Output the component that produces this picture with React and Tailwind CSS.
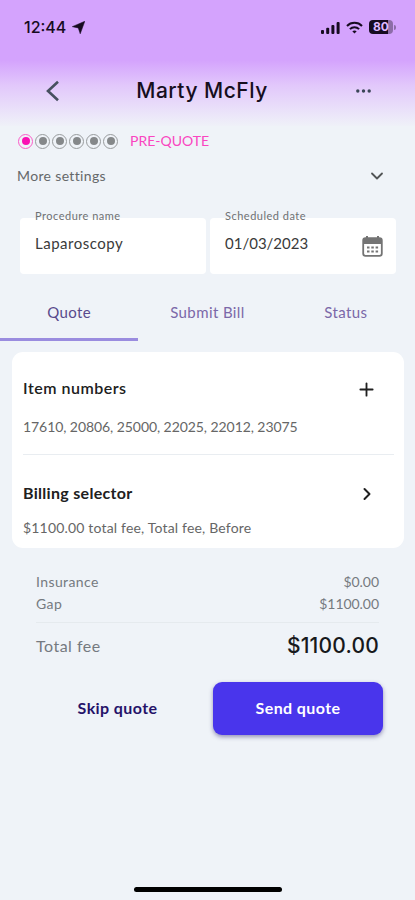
import React, { useState } from 'react';
import { ChevronDown, ChevronRight, Plus } from 'lucide-react';

const tabs = ['Quote', 'Submit Bill', 'Status'];

function StatusBar() {
  return (
    <div className="h-[54px] pl-[24px] pr-[19px] flex items-center justify-between font-['Inter',sans-serif] text-[#170b20]">
      <div className="flex items-center gap-[6px]">
        <span className="text-[16px] font-medium leading-none">12:44</span>
        <svg width="13" height="13" viewBox="0 0 12 12" fill="currentColor">
          <path d="M11.800 0.300 7.600 11.800 5.800 6.400 0.300 5.200Z" stroke="currentColor" strokeWidth=".5" strokeLinejoin="round" />
        </svg>
      </div>
      <div className="flex items-center gap-[6px]">
        <svg width="19" height="13" viewBox="0 0 19 13" fill="currentColor">
          <rect x="0" y="9" width="3" height="4" rx="1" />
          <rect x="5.2" y="6.8" width="3" height="6.2" rx="1" />
          <rect x="10.4" y="4" width="3" height="9" rx="1" />
          <rect x="15.6" y="1" width="3" height="12" rx="1" />
        </svg>
        <svg width="17" height="13" viewBox="0 0 17 13" fill="none" stroke="currentColor" strokeWidth="2">
          <path d="M1 5C5 .8 12 .8 16 5" />
          <path d="M3.9 8.1C6.5 5.5 10.5 5.5 13.1 8.1" />
          <path d="M8.5 12.6 6.3 10.3Q8.5 8.5 10.7 10.3Z" fill="currentColor" stroke="none" />
        </svg>
        <div className="flex items-center gap-px">
          <span className="w-[24px] h-[14px] rounded-[4px] bg-linear-to-r from-[#170b20] from-80% to-[#8d6ca8] to-80% text-[#dfb8ff] text-[12px] font-bold leading-[14px] text-center">
            80
          </span>
          <span className="w-[2px] h-[5px] rounded-r bg-[#8d6ca8]" />
        </div>
      </div>
    </div>
  );
}

function Step({ active }) {
  return (
    <span
      className={`w-[15px] h-[15px] rounded-full border-[1.5px] flex items-center justify-center ${
        active ? 'border-[#fb5cc8]' : 'border-[#989b9d]'
      }`}
    >
      <span className={`w-[8px] h-[8px] rounded-full ${active ? 'bg-[#fa10b4]' : 'bg-[#85888a]'}`} />
    </span>
  );
}

function CalendarIcon() {
  return (
    <svg width="21" height="22" viewBox="0 0 21 22" fill="none">
      <rect x="1.2" y="3.2" width="18.6" height="17.6" rx="2.2" stroke="#747474" strokeWidth="1.8" />
      <path d="M1 9V5a2 2 0 0 1 2-2h15a2 2 0 0 1 2 2v4Z" fill="#747474" />
      <path d="M5 1v4M16 1v4" stroke="#747474" strokeWidth="2" />
      <path d="M5 12.5h2.500M9.300 12.5h2.500M13.600 12.5h2.500M5 16.500h2.500M9.300 16.500h2.500M13.600 16.500h2.500" stroke="#747474" strokeWidth="2" />
    </svg>
  );
}

function Field({ label, value, valueClass, children }) {
  return (
    <div className="relative w-[186px] h-[56px] bg-white rounded-[4px] pl-[15px] pr-[13px] flex items-center justify-between">
      <span className="absolute left-[15px] -top-[9px] leading-[14px] text-[11px] tracking-[0.5px] text-[#6e7173] whitespace-nowrap">
        {label}
      </span>
      <span className={`text-[#3a3a3a] -mt-[6px] ${valueClass}`}>{value}</span>
      {children}
    </div>
  );
}

export default function App() {
  const [tab, setTab] = useState('Quote');

  return (
    <div className="w-[415px] h-[900px] overflow-hidden bg-[#eff3f8] font-['Lato','Noto_Sans',sans-serif] flex flex-col">
      <header className="h-[126px] shrink-0 bg-linear-to-b from-[#d4a3fd] from-48% via-[#e2c8fb] via-68% to-[#eff1f8]">
        <StatusBar />
        <div className="h-[74px] pl-[45px] pr-[44px] flex items-center justify-between">
          <svg width="15" height="22" viewBox="0 0 15 22" fill="none" stroke="#47505f" strokeWidth="2.6">
            <path d="M13 1.800 3 11l10 9.200" />
          </svg>
          <h1 className="mr-[12px] font-['Inter',sans-serif] text-[21px] font-medium tracking-[0.5px] text-[#160e1d]">Marty McFly</h1>
          <svg width="15" height="4" viewBox="0 0 15 4" fill="#3b4657">
            <circle cx="1.800" cy="2" r="1.700" />
            <circle cx="7.500" cy="2" r="1.700" />
            <circle cx="13.200" cy="2" r="1.700" />
          </svg>
        </div>
      </header>

      <div className="h-[30px] shrink-0 pl-[18px] flex items-center">
        <div className="flex gap-[2px]">
          {[0, 1, 2, 3, 4, 5].map(i => (
            <Step key={i} active={i === 0} />
          ))}
        </div>
        <span className="ml-[12px] -mt-[2px] text-[14px] text-[#fa45c0]">PRE-QUOTE</span>
      </div>

      <div className="h-[40px] shrink-0 pl-[17px] pr-[28px] flex items-center justify-between text-[#65686a]">
        <span className="-mt-[2px] text-[14px] tracking-[0.35px]">More settings</span>
        <ChevronDown size={20} strokeWidth={2.2} className="text-[#515456]" />
      </div>

      <div className="shrink-0 mt-[22px] ml-[20px] flex gap-[4px]">
        <Field label="Procedure name" value="Laparoscopy" valueClass="text-[15px] tracking-[0.5px]" />
        <Field label="Scheduled date" value="01/03/2023" valueClass="text-[15px] tracking-[0px]">
          <CalendarIcon />
        </Field>
      </div>

      <nav className="h-[67px] shrink-0 grid grid-cols-3">
        {tabs.map(t => (
          <button
            key={t}
            onClick={() => setTab(t)}
            className={`pt-[13px] border-b-[3px] text-[15px] tracking-[0.4px] ${
              t === tab ? 'border-[#9a8cdf] text-[#594a8c]' : 'border-transparent text-[#7b68a8]'
            }`}
          >
            {t}
          </button>
        ))}
      </nav>

      <section className="shrink-0 mt-[11px] ml-[12px] w-[392px] h-[196px] rounded-[11px] bg-white pl-[11px] pr-[10px]">
        <div className="h-[103px] pt-[24px] border-b border-[#e9edf1]">
          <div className="h-[26px] pr-[17px] flex items-center justify-between text-[#202020]">
            <h2 className="-mt-[2px] text-[16px] font-semibold tracking-[0.5px]">Item numbers</h2>
            <Plus size={21} strokeWidth={2.1} />
          </div>
          <p className="mt-[15px] text-[14px] leading-[20px] tracking-[-0.07px] text-[#666666]">17610, 20806, 25000, 22025, 22012, 23075</p>
        </div>
        <div className="pt-[26px]">
          <div className="h-[26px] pr-[17px] flex items-center justify-between text-[#202020]">
            <h2 className="-mt-[2px] text-[16px] font-bold tracking-[0.3px]">Billing selector</h2>
            <ChevronRight size={20} strokeWidth={2.4} />
          </div>
          <p className="mt-[11px] text-[14px] leading-[20px] tracking-[0.18px] text-[#666666]">$1100.00 total fee, Total fee, Before</p>
        </div>
      </section>

      <section className="shrink-0 mt-[23px] ml-[36px] w-[343px] text-[#757a80]">
        <div className="text-[14px] leading-[22px] tracking-[0.4px] pb-[7px] border-b border-[#e5eaee]">
          <div className="flex justify-between">
            <span>Insurance</span>
            <span className="tracking-[-0.05px]">$0.00</span>
          </div>
          <div className="flex justify-between">
            <span>Gap</span>
            <span className="tracking-[-0.05px]">$1100.00</span>
          </div>
        </div>
        <div className="h-[46px] flex items-center justify-between">
          <span className="text-[16px] tracking-[0.5px]">Total fee</span>
          <span className="font-['Inter',sans-serif] text-[21px] font-medium tracking-[0.2px] text-[#17191c]">$1100.00</span>
        </div>
      </section>

      <div className="shrink-0 mt-[13px] ml-[22px] flex">
        <button className="w-[191px] h-[53px] pb-[2px] text-[16px] font-bold tracking-[0.4px] text-[#251269]">Skip quote</button>
        <button className="w-[170px] h-[53px] pb-[2px] rounded-[9px] bg-[#4935ec] text-[16px] font-bold tracking-[0.4px] text-white shadow-[0_2px_4px_rgba(60,50,120,0.5)]">
          Send quote
        </button>
      </div>

      <div className="mt-auto mb-[8px] mx-auto w-[148px] h-[5px] shrink-0 rounded-full bg-black" />
    </div>
  );
}
